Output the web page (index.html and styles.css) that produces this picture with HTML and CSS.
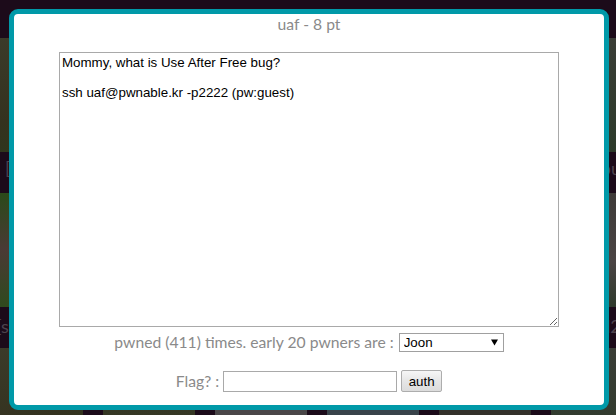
FILE: index.html
```html
<!DOCTYPE html>
<html>
<head>
<meta charset="utf-8">
<title>uaf - 8 pt</title>
<link rel="stylesheet" href="styles.css">
</head>
<body>
<div class="page">
  <div class="page-title">[Toddler's Bottle]</div>
  <div class="tiles">
    <div class="card"><div class="thumb t-a"></div><div class="label lbl-r1l">[leg]</div></div>
    <div class="card"><div class="thumb t-b"></div><div class="label">[bof]</div></div>
    <div class="card"><div class="thumb t-c"></div><div class="label">[flag]</div></div>
    <div class="card"><div class="thumb t-d"></div><div class="label">[fd]</div></div>
    <div class="card"><div class="thumb t-e"></div><div class="label">[random]</div></div>
    <div class="card"><div class="thumb t-f"></div><div class="label lbl-r1r">[input]</div></div>
    <div class="card"><div class="thumb t-g"></div><div class="label lbl-r2l">[shellshock]</div></div>
    <div class="card"><div class="thumb t-b"></div><div class="label">[coin1]</div></div>
    <div class="card"><div class="thumb t-c"></div><div class="label">[cmd1]</div></div>
    <div class="card"><div class="thumb t-d"></div><div class="label">[uaf]</div></div>
    <div class="card"><div class="thumb t-e"></div><div class="label">[asm]</div></div>
    <div class="card"><div class="thumb t-h"></div><div class="label lbl-r2r">[cmd2]</div></div>
    <div class="card"><div class="thumb t-a"></div><div class="label">[memcpy]</div></div>
    <div class="card"><div class="thumb t-b"></div><div class="label">[unlink]</div></div>
    <div class="card"><div class="thumb t-i"></div><div class="label">[blukat]</div></div>
    <div class="card"><div class="thumb t-j"></div><div class="label">[lotto]</div></div>
    <div class="card"><div class="thumb t-e"></div><div class="label">[mistake]</div></div>
    <div class="card"><div class="thumb t-f"></div><div class="label">[passcode]</div></div>
  </div>
</div>

<div class="modal">
  <div class="modal-title">uaf - 8 pt</div>
  <textarea class="desc" spellcheck="false">Mommy, what is Use After Free bug?

ssh uaf@pwnable.kr -p2222 (pw:guest)</textarea>
  <div class="row pwned-row">
    <span class="muted">pwned (411) times. early 20 pwners are :</span>
    <span class="select-wrap">
      <select class="pwners">
        <option>Joon</option>
      </select>
      <svg class="select-arrow" width="7" height="7" viewBox="0 0 7 7"><path d="M0 0.5H7L3.5 6.5Z" fill="#000"/></svg>
    </span>
  </div>
  <div class="row flag-row">
    <span class="muted">Flag? :</span>
    <input class="flag-input" type="text">
    <button class="auth-btn">auth</button>
  </div>
</div>
</body>
</html>
```

FILE: styles.css
```css
html, body {
  margin: 0;
  padding: 0;
  height: 100%;
  overflow: hidden;
}

body {
  background: #1c0b1a;
  font-family: Lato, "Open Sans", sans-serif;
}

.page {
  width: 616px;
  height: 415px;
  overflow: hidden;
}

.page-title {
  margin-top: 4px;
  height: 34px;
  font-size: 20px;
  line-height: 24px;
  color: #4a3d4a;
  text-align: center;
  padding-left: 16px;
}

.tiles {
  display: grid;
  grid-template-columns: repeat(6, 92px);
  column-gap: 20px;
  margin-left: -9px;
}

.card {
  display: flex;
  flex-direction: column;
  min-width: 0;
}

.thumb {
  height: 114px;
}

.label {
  height: 41px;
  font-size: 18px;
  line-height: 32px;
  color: #4d424d;
  text-align: center;
  white-space: nowrap;
}

.lbl-r1l { text-align: left; padding-left: 14px; }
.lbl-r1r { text-align: left; padding-left: 30px; }
.lbl-r2l { text-align: left; padding-left: 5px; line-height: 38px; }
.lbl-r2r { text-align: left; padding-left: 21px; line-height: 38px; }

.t-a { background: linear-gradient(160deg, #3b3b2a 0%, #34321f 60%, #2b3a1a 100%); }
.t-b { background: linear-gradient(180deg, #2f3a22 0%, #3a3526 100%); }
.t-c { background: #3b3838; }
.t-d { background: #2d3438; }
.t-e { background: #33302a; }
.t-f { background: linear-gradient(180deg, #3a3d36 0%, #2c3a2a 100%); }
.t-g { background: linear-gradient(180deg, #2b4a1a 0%, #4a3a35 50%, #2f4a1d 100%); }
.t-h { background: linear-gradient(180deg, #3e3a38 0%, #4a4444 60%, #2f3a2c 100%); }
.t-i { background: #4a4648; }
.t-j { background: #39434a; }

.modal {
  position: absolute;
  left: 9px;
  top: 9px;
  width: 600px;
  height: 401px;
  box-sizing: border-box;
  border: 5px solid #0099a8;
  border-radius: 9px;
  background: #ffffff;
  display: flex;
  flex-direction: column;
  align-items: center;
}

.modal-title {
  font-size: 15.7px;
  line-height: 20px;
  color: #8a8a8a;
}

.desc {
  display: block;
  margin-top: 18px;
  width: 500px;
  height: 275px;
  box-sizing: border-box;
  border: 1px solid #a9a9a9;
  padding: 2px;
  font-family: "Liberation Sans", Arial, sans-serif;
  font-size: 13.33px;
  line-height: 15px;
  color: #000;
  background: #fff;
  outline: none;
}

.row {
  display: flex;
  align-items: center;
  justify-content: center;
}

.muted {
  font-size: 15.7px;
  color: #8a8a8a;
}

.pwned-row {
  margin-top: 3px;
  height: 24px;
  gap: 5px;
}

.select-wrap {
  position: relative;
  display: block;
}

.pwners {
  display: block;
  appearance: none;
  -webkit-appearance: none;
  width: 105px;
  height: 19px;
  box-sizing: border-box;
  border: 1px solid #a0a0a0;
  border-radius: 0;
  background: #fff;
  padding: 0 0 0 4px;
  margin: 0;
  font-family: "Liberation Sans", Arial, sans-serif;
  font-size: 13.33px;
  color: #000;
}

.select-arrow {
  position: absolute;
  right: 6px;
  top: 6px;
}

.flag-row {
  margin-top: 15px;
  height: 24px;
  gap: 4px;
}

.flag-input {
  display: block;
  width: 174px;
  height: 21px;
  box-sizing: border-box;
  border: 1px solid #a9a9a9;
  margin: 0;
  padding: 1px 2px;
  background: #fff;
  font-family: "Liberation Sans", Arial, sans-serif;
  font-size: 13px;
}

.auth-btn {
  display: block;
  width: 41px;
  height: 22px;
  box-sizing: border-box;
  border: 1px solid #adadad;
  border-radius: 2px;
  margin: 0;
  padding: 0;
  background: linear-gradient(180deg, #f6f6f6 0%, #e6e6e6 50%, #dcdcdc 100%);
  font-family: "Liberation Sans", Arial, sans-serif;
  font-size: 13.33px;
  color: #000;
}
```
